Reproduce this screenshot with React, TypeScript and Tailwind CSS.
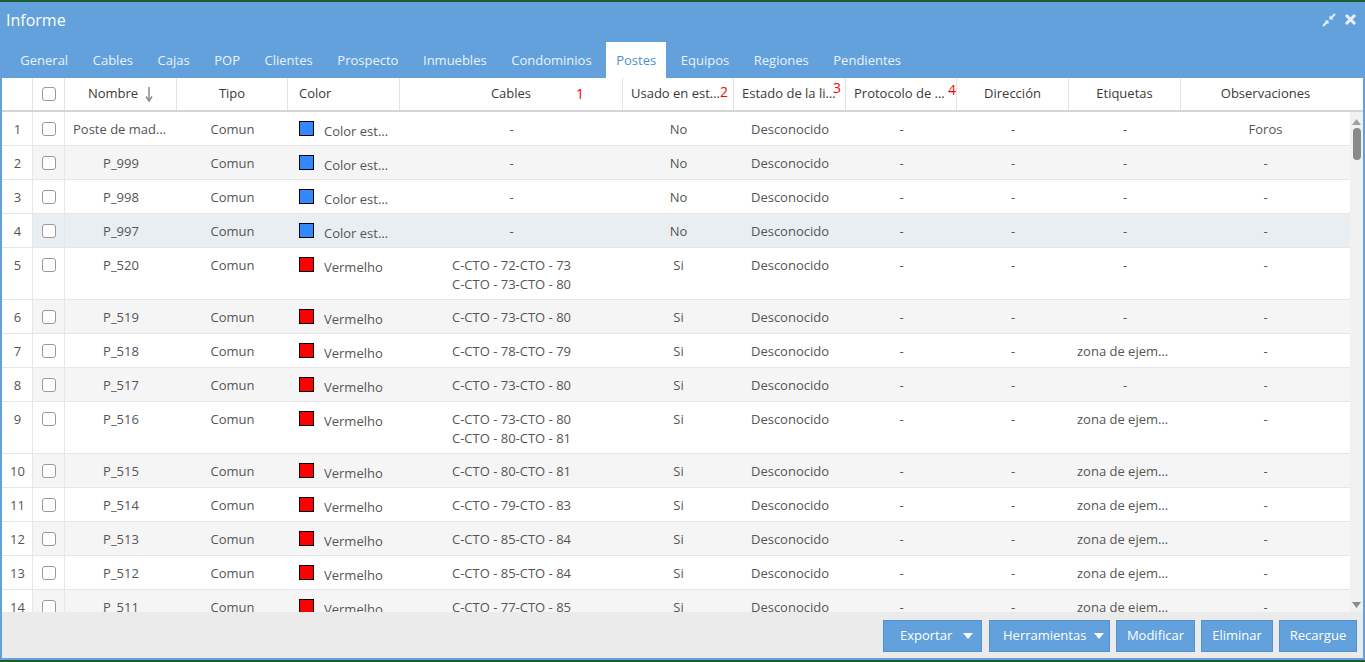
import React from "react";

type Row = {
  n: number;
  nombre: string;
  swatch: "blue" | "red";
  color: string;
  cables: string[];
  usado: string;
  etiquetas: string;
  obs: string;
};

const rows: Row[] = [
  { n: 1, nombre: "Poste de madera", swatch: "blue", color: "Color estándar", cables: ["-"], usado: "No", etiquetas: "-", obs: "Foros" },
  { n: 2, nombre: "P_999", swatch: "blue", color: "Color estándar", cables: ["-"], usado: "No", etiquetas: "-", obs: "-" },
  { n: 3, nombre: "P_998", swatch: "blue", color: "Color estándar", cables: ["-"], usado: "No", etiquetas: "-", obs: "-" },
  { n: 4, nombre: "P_997", swatch: "blue", color: "Color estándar", cables: ["-"], usado: "No", etiquetas: "-", obs: "-" },
  { n: 5, nombre: "P_520", swatch: "red", color: "Vermelho", cables: ["C-CTO - 72-CTO - 73", "C-CTO - 73-CTO - 80"], usado: "Si", etiquetas: "-", obs: "-" },
  { n: 6, nombre: "P_519", swatch: "red", color: "Vermelho", cables: ["C-CTO - 73-CTO - 80"], usado: "Si", etiquetas: "-", obs: "-" },
  { n: 7, nombre: "P_518", swatch: "red", color: "Vermelho", cables: ["C-CTO - 78-CTO - 79"], usado: "Si", etiquetas: "zona de ejemplo", obs: "-" },
  { n: 8, nombre: "P_517", swatch: "red", color: "Vermelho", cables: ["C-CTO - 73-CTO - 80"], usado: "Si", etiquetas: "-", obs: "-" },
  { n: 9, nombre: "P_516", swatch: "red", color: "Vermelho", cables: ["C-CTO - 73-CTO - 80", "C-CTO - 80-CTO - 81"], usado: "Si", etiquetas: "zona de ejemplo", obs: "-" },
  { n: 10, nombre: "P_515", swatch: "red", color: "Vermelho", cables: ["C-CTO - 80-CTO - 81"], usado: "Si", etiquetas: "zona de ejemplo", obs: "-" },
  { n: 11, nombre: "P_514", swatch: "red", color: "Vermelho", cables: ["C-CTO - 79-CTO - 83"], usado: "Si", etiquetas: "zona de ejemplo", obs: "-" },
  { n: 12, nombre: "P_513", swatch: "red", color: "Vermelho", cables: ["C-CTO - 85-CTO - 84"], usado: "Si", etiquetas: "zona de ejemplo", obs: "-" },
  { n: 13, nombre: "P_512", swatch: "red", color: "Vermelho", cables: ["C-CTO - 85-CTO - 84"], usado: "Si", etiquetas: "zona de ejemplo", obs: "-" },
  { n: 14, nombre: "P_511", swatch: "red", color: "Vermelho", cables: ["C-CTO - 77-CTO - 85"], usado: "Si", etiquetas: "zona de ejemplo", obs: "-" },
];

const tabs = ["General", "Cables", "Cajas", "POP", "Clientes", "Prospecto", "Inmuebles", "Condominios", "Postes", "Equipos", "Regiones", "Pendientes"];

const cols = "grid grid-cols-[31px_32px_112px_111px_112px_223px_111px_112px_111px_112px_112px_169px]";

const Checkbox = () => (
  <div className="w-[14px] h-[14px] rounded-[3px] border-[1.5px] border-[#9a9a9a] bg-white" />
);

const Caret = ({ gap }: { gap: string }) => (
  <svg width="10" height="6" viewBox="0 0 10 6" className={gap}>
    <path d="M0 0 L10 0 L5 6 Z" fill="white" />
  </svg>
);

const Cell = ({ children, className = "" }: { children: React.ReactNode; className?: string }) => (
  <div className={"pt-[8px] pb-[5px] px-[8px] leading-[19px] truncate " + className}>{children}</div>
);

const App = () => {
  return (
    <div className="w-[1365px] h-[662px] bg-[#1e5b31] pt-[2px] pb-[2px] overflow-hidden" style={{ fontFamily: '"Open Sans", "Liberation Sans", sans-serif' }}>
      <div className="h-[658px] bg-[#62a1dc] px-[2px] pb-[2px] flex flex-col">
        {/* title bar */}
        <div className="h-[40px] flex items-center justify-between pl-[4px] pr-[6px] pb-[5px]">
          <span className="text-white text-[16px]">Informe</span>
          <div className="flex items-center gap-[8px]">
            <svg width="14" height="14" viewBox="0 0 14 14">
              <path d="M13 1 L8.5 5.5" stroke="#e8f1fb" strokeWidth="2" />
              <path d="M7.5 2.5 L7.5 6.5 L11.5 6.5 Z" fill="#e8f1fb" />
              <path d="M1 13 L5.5 8.5" stroke="#e8f1fb" strokeWidth="2" />
              <path d="M2.5 7.5 L6.5 7.5 L6.5 11.5 Z" fill="#e8f1fb" />
            </svg>
            <svg width="13" height="13" viewBox="0 0 13 13">
              <path d="M2 2 L11 11 M11 2 L2 11" stroke="#e8f1fb" strokeWidth="3" />
            </svg>
          </div>
        </div>
        {/* tabs */}
        <div className="h-[36px] flex items-end pl-[8px] gap-[4px]">
          {tabs.map((t) => (
            <div
              key={t}
              className={
                "h-[36px] px-[10.3px] pt-[1px] flex items-center text-[13px] " +
                (t === "Postes" ? "bg-white text-[#4d8fd1]" : "text-[#eaf2fb]")
              }
            >
              {t}
            </div>
          ))}
        </div>
        {/* grid */}
        <div className="flex-1 bg-white flex flex-col min-h-0">
          <div className="relative pr-[13px] border-b-2 border-[#d4d4d4] text-[13px] text-[#3a3a3a]">
            <div className={cols + " h-[32px]"}>
              <div className="border-r border-[#e2e2e2]" />
              <div className="border-r border-[#e2e2e2] flex items-center justify-center"><Checkbox /></div>
              <div className="border-r border-[#e2e2e2] flex items-center justify-center gap-[7px]">
                Nombre
                <svg width="8" height="16" viewBox="0 0 8 16">
                  <path d="M4 1 L4 14" stroke="#8a8a8a" strokeWidth="1.5" />
                  <path d="M1 10.5 L4 15 L7 10.5" stroke="#8a8a8a" strokeWidth="1.5" fill="none" />
                </svg>
              </div>
              <div className="border-r border-[#e2e2e2] flex items-center justify-center">Tipo</div>
              <div className="border-r border-[#e2e2e2] flex items-center pl-[11px]">Color</div>
              <div className="border-r border-[#e2e2e2] flex items-center justify-center">Cables</div>
              <div className="border-r border-[#e2e2e2] flex items-center justify-center px-[8px]"><span className="truncate">Usado en estructura</span></div>
              <div className="border-r border-[#e2e2e2] flex items-center justify-center px-[8px]"><span className="truncate">Estado de la licencia</span></div>
              <div className="border-r border-[#e2e2e2] flex items-center justify-center px-[8px]"><span className="truncate">Protocolo de revisión</span></div>
              <div className="border-r border-[#e2e2e2] flex items-center justify-center">Dirección</div>
              <div className="border-r border-[#e2e2e2] flex items-center justify-center">Etiquetas</div>
              <div className="flex items-center justify-center">Observaciones</div>
            </div>
            <span className="absolute left-[574px] top-[9px] text-[14px] text-[#ff0000] leading-none">1</span>
            <span className="absolute left-[718px] top-[7px] text-[14px] text-[#ff0000] leading-none">2</span>
            <span className="absolute left-[831px] top-[3px] text-[14px] text-[#ff0000] leading-none">3</span>
            <span className="absolute left-[946px] top-[5px] text-[14px] text-[#ff0000] leading-none">4</span>
          </div>
          <div className="flex-1 min-h-0 flex">
            <div className="flex-1 overflow-hidden text-[13px] text-[#555]">
              {rows.map((r) => (
                <div
                  key={r.n}
                  className={
                    cols +
                    " min-h-[34px] border-b border-[#e6e6e6] " +
                    (r.n === 4 ? "bg-[#e9eef3]" : r.n % 2 === 0 ? "bg-[#f5f5f5]" : "bg-white")
                  }
                >
                  <div className="bg-white border-r border-[#e6e6e6] pt-[8px] leading-[19px] text-center pl-[1px]">{r.n}</div>
                  <div className="border-r border-[#e6e6e6] pt-[10px] flex justify-center"><Checkbox /></div>
                  <Cell className="text-center">{r.nombre}</Cell>
                  <Cell className="text-center">Comun</Cell>
                  <div className="pt-[9px] pl-[11px] pr-[8px] flex items-start gap-[10px]">
                    <div className={"w-[15px] h-[15px] shrink-0 border border-black " + (r.swatch === "blue" ? "bg-[#3388ff]" : "bg-[#ff0000]")} />
                    <span className="truncate leading-[19px] mt-[1px]">{r.color}</span>
                  </div>
                  <div className="pt-[8px] pb-[5px] leading-[19px] flex justify-center">
                    <div>{r.cables.map((c) => <div key={c}>{c}</div>)}</div>
                  </div>
                  <Cell className="text-center">{r.usado}</Cell>
                  <Cell className="text-center">Desconocido</Cell>
                  <Cell className="text-center">-</Cell>
                  <Cell className="text-center">-</Cell>
                  <Cell className="text-center">{r.etiquetas}</Cell>
                  <Cell className="text-center">{r.obs}</Cell>
                </div>
              ))}
            </div>
            {/* scrollbar */}
            <div className="w-[13px] bg-[#f1f1f1] flex flex-col items-center">
              <svg width="9" height="6" viewBox="0 0 9 6" className="mt-[7px]">
                <path d="M0 6 L9 6 L4.5 0 Z" fill="#a0a0a0" />
              </svg>
              <div className="w-[8px] h-[32px] rounded-full bg-[#8a8a8a] mt-[3px]" />
              <div className="flex-1" />
              <svg width="9" height="6" viewBox="0 0 9 6" className="mb-[4px]">
                <path d="M0 0 L9 0 L4.5 6 Z" fill="#8a8a8a" />
              </svg>
            </div>
          </div>
          {/* footer */}
          <div className="h-[46px] bg-[#ebebeb] flex items-center justify-end pr-[6px] pt-[2px] gap-[6px] text-[13px] text-white">
            <button className="h-[32px] w-[99px] bg-[#62a1dc] border border-[#4f91d3] flex items-center pl-[16px]">Exportar<Caret gap="ml-[11px]" /></button>
            <button className="h-[32px] w-[121px] ml-[1px] bg-[#62a1dc] border border-[#4f91d3] flex items-center pl-[13px]">Herramientas<Caret gap="ml-[8px]" /></button>
            <button className="h-[32px] w-[79px] bg-[#62a1dc] border border-[#4f91d3]">Modificar</button>
            <button className="h-[32px] w-[72px] bg-[#62a1dc] border border-[#4f91d3]">Eliminar</button>
            <button className="h-[32px] w-[78px] bg-[#62a1dc] border border-[#4f91d3]">Recargue</button>
          </div>
        </div>
      </div>
    </div>
  );
};

export default App;
